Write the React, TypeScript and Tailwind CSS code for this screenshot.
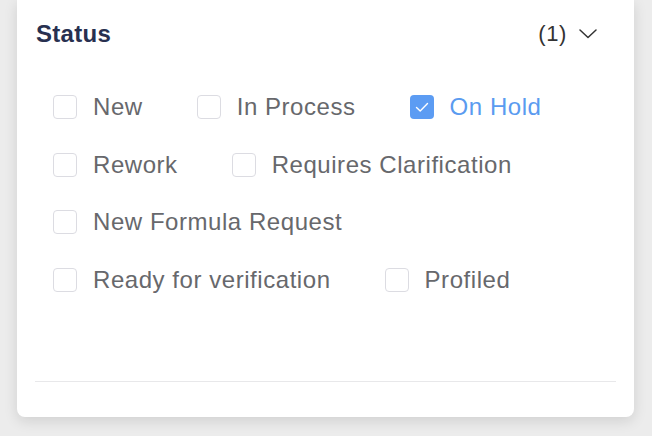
import { useState } from "react";

const STATUSES = [
  "New",
  "In Process",
  "On Hold",
  "Rework",
  "Requires Clarification",
  "New Formula Request",
  "Ready for verification",
  "Profiled",
];

function StatusCheckbox({ label, checked, onToggle }: { label: string; checked: boolean; onToggle: () => void }) {
  return (
    <label className="flex h-[24px] cursor-pointer items-center gap-[16px]" onClick={onToggle}>
      <span
        className={
          checked
            ? "flex h-[24px] w-[24px] items-center justify-center rounded-[4px] bg-[#5c9cf3]"
            : "h-[24px] w-[24px] rounded-[4px] border border-[#dcdce2] bg-white"
        }
      >
        {checked && (
          <svg width="14" height="11" viewBox="0 0 14 11" fill="none">
            <path d="M1.5 5.5 L5.2 9 L12.5 1.5" stroke="white" strokeWidth="1.4" strokeLinecap="round" strokeLinejoin="round" />
          </svg>
        )}
      </span>
      <span className={checked ? "text-[24px] tracking-[0.55px] text-[#5a9bf0]" : "text-[24px] tracking-[0.55px] text-[#67686c]"}>
        {label}
      </span>
    </label>
  );
}

export default function App() {
  const [selected, setSelected] = useState<string[]>(["On Hold"]);

  const toggle = (s: string) =>
    setSelected((prev) => (prev.includes(s) ? prev.filter((x) => x !== s) : [...prev, s]));

  return (
    <div
      className="h-[436px] w-[652px] overflow-hidden bg-[#ececec] pl-[17px] pr-[18px]"
      style={{ fontFamily: '"Liberation Sans", Arial, sans-serif' }}
    >
      <div className="flex h-[417px] flex-col rounded-b-[8px] bg-white px-[18px] shadow-[0_4px_14px_rgba(0,0,0,0.12)]">
        <div className="flex items-center justify-between pl-[1px] pr-[19px] pt-[17px]">
          <h2 className="text-[24px] font-bold leading-[26px] tracking-[0.3px] text-[#283050]">Status</h2>
          <div className="flex items-center gap-[12px] text-[#333333]">
            <span className="text-[22px] tracking-[0.6px]">({selected.length})</span>
            <svg width="18" height="10" viewBox="0 0 18 10" fill="none">
              <path d="M1 1 L9 8.5 L17 1" stroke="#333333" strokeWidth="1.5" strokeLinecap="round" strokeLinejoin="round" />
            </svg>
          </div>
        </div>

        <div className="mt-[45px] flex flex-wrap gap-x-[54px] gap-y-[33.5px] pl-[18px] pr-[10px]">
          {STATUSES.map((s) => (
            <StatusCheckbox key={s} label={s} checked={selected.includes(s)} onToggle={() => toggle(s)} />
          ))}
        </div>

        <div className="mt-auto mb-[35px] h-px bg-[#e8e8ea]" />
      </div>
    </div>
  );
}
